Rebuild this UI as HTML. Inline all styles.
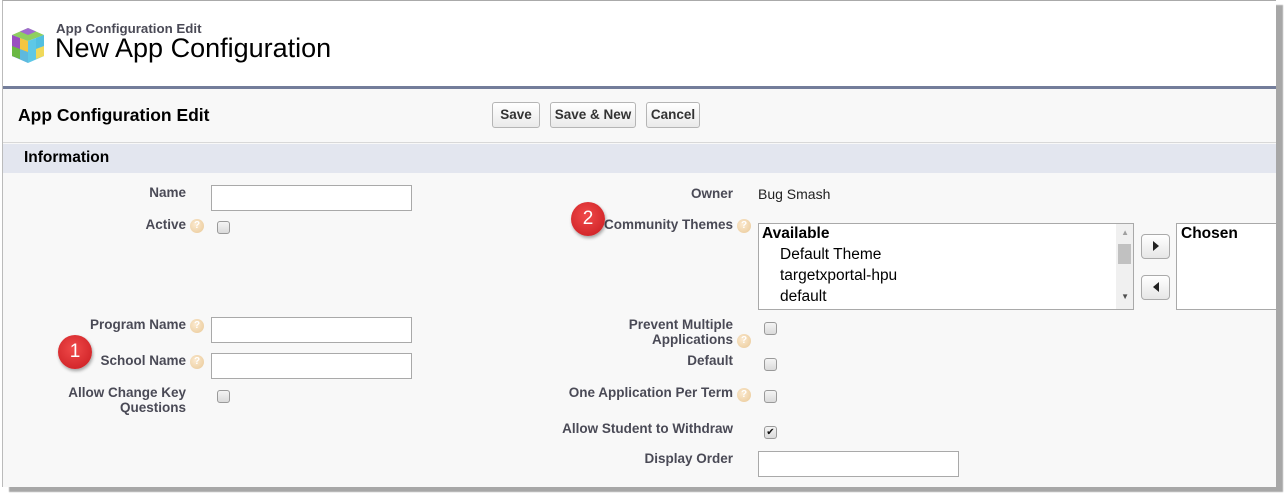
<!DOCTYPE html>
<html><head><style>
*{margin:0;padding:0;box-sizing:border-box}
body{width:1286px;height:497px;background:#fff;position:relative;overflow:hidden;font-family:"Liberation Sans",Arial,sans-serif}
.a{position:absolute}
.frame{left:2px;top:0;width:1274px;height:487px;border-top:1px solid #aaa;border-left:1px solid #bbb;background:#fff;box-shadow:7px 5px 1px #a7a7a7}
.lbl{position:absolute;font-size:13.5px;font-weight:bold;color:#4a4a56;text-align:right;white-space:nowrap}
.help{position:absolute;width:14px;height:14px;border-radius:50%;background:radial-gradient(circle at 40% 40%,#fbe9cf,#e9c896);color:#fff;font-size:10px;font-weight:bold;text-align:center;line-height:14px}
.inp{position:absolute;height:26px;background:#fff;border:1px solid #a9a9a9}
.cb{position:absolute;width:13px;height:13px;border:1px solid #9a9a9a;border-radius:3px;background:linear-gradient(#f4f4f4,#dadada)}
.btn{position:absolute;top:102px;height:26px;border:1px solid #b5b5b5;border-radius:3px;background:linear-gradient(#fff,#eaeaea);font-size:13.5px;font-weight:bold;color:#333;text-align:center;line-height:24px;white-space:nowrap}
.badge{position:absolute;width:34px;height:34px;border-radius:50%;background:radial-gradient(circle at 45% 40%,#f04a4a,#c81a1f);color:#fff;font-size:19px;text-align:center;line-height:34px;box-shadow:1px 2px 3px rgba(0,0,0,.35)}
</style></head><body>
<div class="a frame"></div>
<svg class="a" style="left:10px;top:26px" width="36" height="40" viewBox="0 0 36 40">
<polygon points="18,2 34,9 18,15 2,9" fill="#8fcf5f"/>
<polygon points="18,2 26,5.5 18,9 10,5.5" fill="#a06ad0"/>
<polygon points="2,9 18,15 18,37 2,30" fill="#5eb9de"/>
<polygon points="2,9 10,12 10,33 2,30" fill="#9a4fc0"/>
<polygon points="2,20 10,23 10,33 2,30" fill="#6ab844"/>
<polygon points="10,12 18,15 18,26 10,23" fill="#f3c640"/>
<polygon points="18,15 34,9 34,30 18,37" fill="#5ec8e6"/>
<polygon points="26,12 34,9 34,20 26,23" fill="#52bfe0"/>
<polygon points="26,23 34,20 34,30 26,33" fill="#f0d95a"/>
</svg>
<div class="a" style="left:56px;top:21px;font-size:13.3px;font-weight:bold;color:#4a4a56">App Configuration Edit</div>
<div class="a" style="left:55px;top:33px;font-size:27px;color:#000">New App Configuration</div>
<div class="a" style="left:3px;top:86px;width:1273px;height:401px;background:#f8f8f8;border-top:3px solid #737d9a"></div>
<div class="a" style="left:18px;top:105px;font-size:17.5px;font-weight:bold;color:#000">App Configuration Edit</div>
<div class="btn" style="left:492px;width:48px">Save</div>
<div class="btn" style="left:550px;width:86px">Save &amp; New</div>
<div class="btn" style="left:646px;width:54px">Cancel</div>
<div class="a" style="left:3px;top:142px;width:1273px;height:1px;background:#d8d8d8"></div>
<div class="a" style="left:3px;top:144px;width:1273px;height:29px;background:#e3e6ef"></div>
<div class="a" style="left:24px;top:149px;font-size:15.5px;font-weight:bold;color:#000">Information</div>

<div class="lbl" style="left:40px;width:146px;top:185px">Name</div>
<div class="inp" style="left:211px;top:185px;width:201px"></div>
<div class="lbl" style="left:40px;width:146px;top:217px">Active</div>
<div class="help" style="left:190px;top:219px">?</div>
<div class="cb" style="left:217px;top:221px"></div>
<div class="lbl" style="left:40px;width:146px;top:317px">Program Name</div>
<div class="help" style="left:190px;top:319px">?</div>
<div class="inp" style="left:211px;top:317px;width:201px"></div>
<div class="lbl" style="left:40px;width:146px;top:353px">School Name</div>
<div class="help" style="left:190px;top:355px">?</div>
<div class="inp" style="left:211px;top:353px;width:201px"></div>
<div class="lbl" style="left:30px;width:156px;top:385px;line-height:15px">Allow Change Key<br>Questions</div>
<div class="cb" style="left:217px;top:390px"></div>
<div class="badge" style="left:58px;top:335px">1</div>

<div class="lbl" style="left:560px;width:173px;top:186px">Owner</div>
<div class="a" style="left:758px;top:186px;font-size:14px;color:#222">Bug Smash</div>
<div class="lbl" style="left:560px;width:173px;top:217px">Community Themes</div>
<div class="help" style="left:737px;top:219px">?</div>
<div class="badge" style="left:571px;top:202px">2</div>
<div class="a" style="left:758px;top:223px;width:376px;height:87px;background:#fff;border:1px solid #a9a9a9;font-size:15.5px;color:#000">
 <div style="position:absolute;left:3px;top:1px;font-weight:bold">Available</div>
 <div style="position:absolute;left:21px;top:22px">Default Theme</div>
 <div style="position:absolute;left:21px;top:43px">targetxportal-hpu</div>
 <div style="position:absolute;left:21px;top:64px">default</div>
 <div style="position:absolute;right:0;top:0;width:17px;height:85px;background:#f0f0f0"></div>
 <div style="position:absolute;right:2px;top:20px;width:13px;height:20px;background:#c1c1c1"></div>
 <div style="position:absolute;right:4px;top:4px;font-size:8px;color:#a0a0a0">▲</div>
 <div style="position:absolute;right:4px;top:68px;font-size:8px;color:#505050">▼</div>
</div>
<div class="a" style="left:1141px;top:234px;width:29px;height:25px;border:1px solid #aaa;border-radius:4px;background:linear-gradient(#fff,#e6e6e6)"><div style="position:absolute;left:11px;top:6px;border-left:6px solid #222;border-top:5px solid transparent;border-bottom:5px solid transparent"></div></div>
<div class="a" style="left:1141px;top:275px;width:29px;height:25px;border:1px solid #aaa;border-radius:4px;background:linear-gradient(#fff,#e6e6e6)"><div style="position:absolute;left:11px;top:6px;border-right:6px solid #222;border-top:5px solid transparent;border-bottom:5px solid transparent"></div></div>
<div class="a" style="left:1176px;top:223px;width:100px;height:87px;background:#fff;border:1px solid #a9a9a9;border-right:none"><div style="position:absolute;left:4px;top:1px;font-size:15.5px;font-weight:bold">Chosen</div></div>

<div class="lbl" style="left:560px;width:173px;top:317px;line-height:15px">Prevent Multiple<br>Applications</div>
<div class="help" style="left:737px;top:334px">?</div>
<div class="cb" style="left:764px;top:322px"></div>
<div class="lbl" style="left:560px;width:173px;top:353px">Default</div>
<div class="cb" style="left:764px;top:358px"></div>
<div class="lbl" style="left:520px;width:213px;top:385px">One Application Per Term</div>
<div class="help" style="left:737px;top:388px">?</div>
<div class="cb" style="left:764px;top:390px"></div>
<div class="lbl" style="left:500px;width:233px;top:421px">Allow Student to Withdraw</div>
<div class="cb" style="left:764px;top:426px;font-size:10px;line-height:11px;text-align:center;color:#111">✔</div>
<div class="lbl" style="left:560px;width:173px;top:451px">Display Order</div>
<div class="inp" style="left:758px;top:451px;width:201px"></div>
</body></html>
